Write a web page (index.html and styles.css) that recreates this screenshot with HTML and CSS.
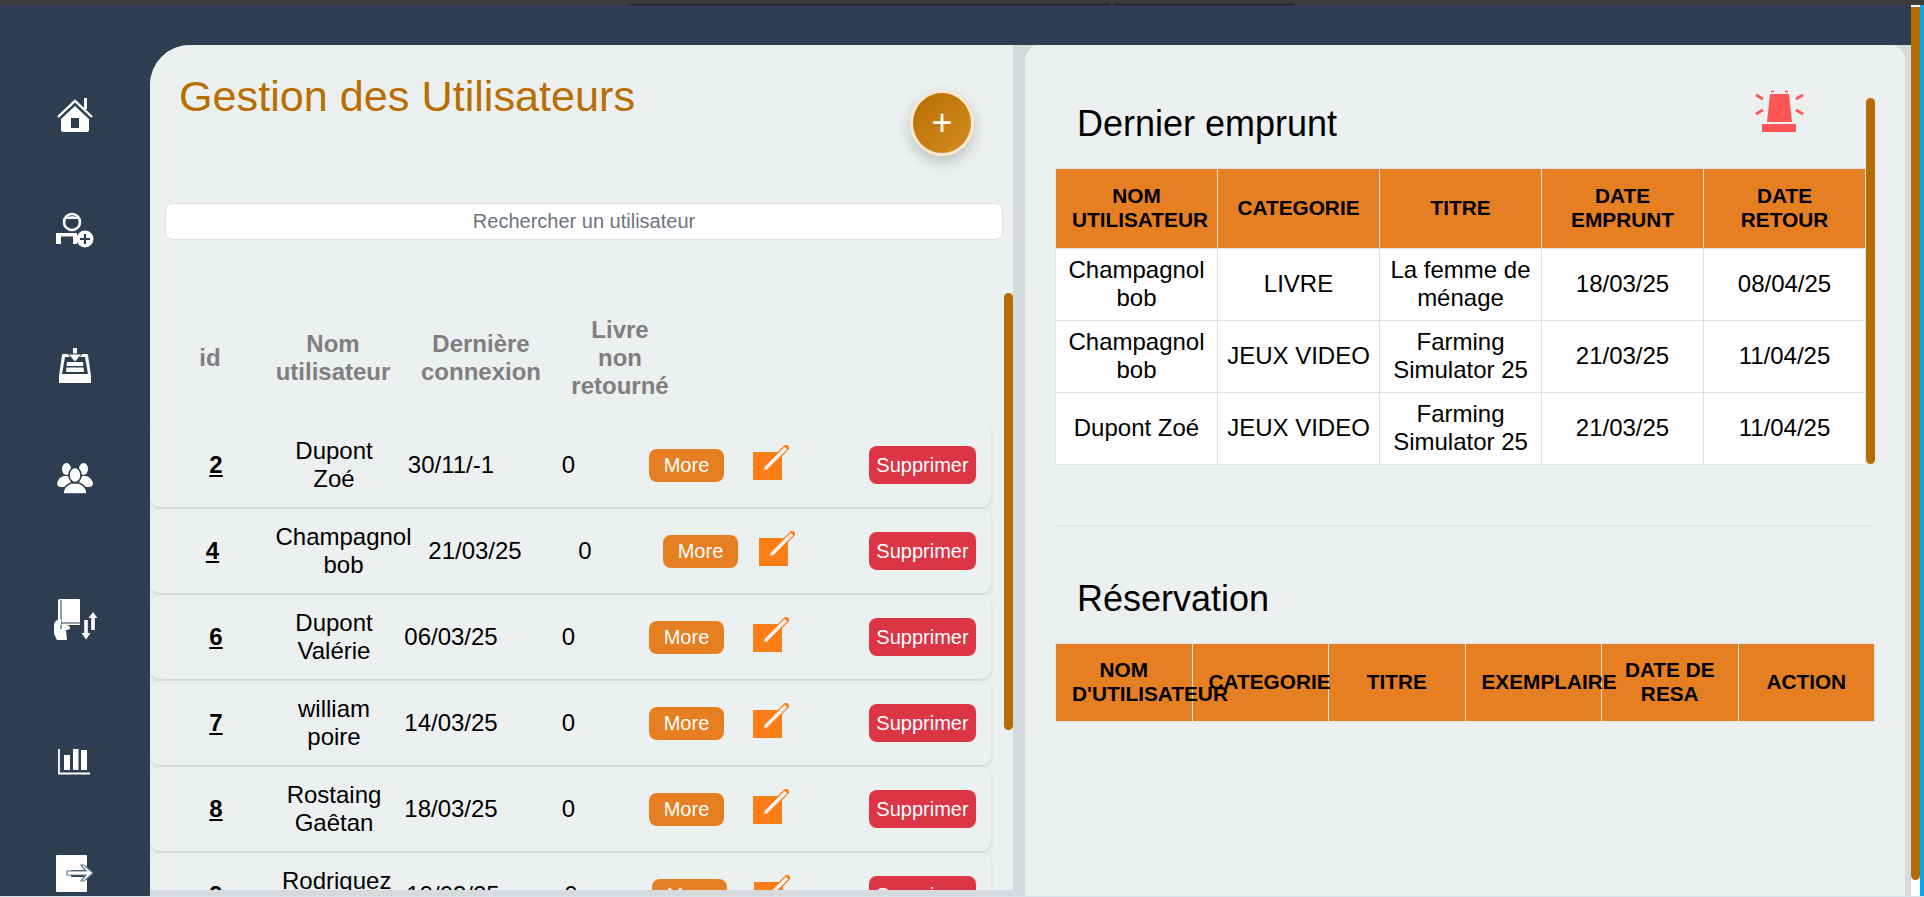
FILE: index.html
```html
<!DOCTYPE html>
<html lang="fr">
<head>
    <meta charset="utf-8">
    <title>Gestion des Utilisateurs</title>
    <link rel="stylesheet" href="styles.css">
</head>
<body>
    <div class="top-strip">
        <span class="tab-line tab-line-a"></span>
        <span class="tab-line tab-line-b"></span>
    </div>

    <div class="page">
        <div class="shell">
            <nav class="sidebar">
                <a href="#" class="nav-item">
                    <svg width="36" height="34" viewBox="0 0 36 34">
                        <path d="M1 19 18 3l17 16" fill="none" stroke="#fff" stroke-width="2.4"/>
                        <rect x="27" y="0" width="3" height="11" fill="#fff"/>
                        <path d="M4 21 18 8l14 13v11q0 2-2 2H6q-2 0-2-2z" fill="#fff"/>
                        <rect x="14" y="20" width="8" height="10" fill="#2c3e50"/>
                    </svg>
                </a>
                <a href="#" class="nav-item">
                    <svg width="38" height="36" viewBox="0 0 38 36">
                        <circle cx="16" cy="10" r="8" fill="none" stroke="#fff" stroke-width="2.6"/>
                        <path d="M9 7q7-6 14 0z" fill="#fff"/>
                        <path d="M0 21h21v11h-4V24.500H5V32H0z" fill="#fff"/>
                        <circle cx="29" cy="27" r="8.5" fill="#fff"/>
                        <path d="M29 22v10M24 27h10" stroke="#2c3e50" stroke-width="2.2"/>
                    </svg>
                </a>
                <a href="#" class="nav-item">
                    <svg width="32" height="35" viewBox="0 0 32 35">
                        <path d="M4 6h24q1 0 1 1l3 21v7H0v-7L3 7q0-1 1-1z" fill="#fff"/>
                        <path d="M6 9h20l3 17H3z" fill="#2c3e50"/>
                        <path d="M8 14h16l1 10H7z" fill="#fff"/>
                        <rect x="6" y="18" width="20" height="1.500" fill="#2c3e50"/>
                        <rect x="14" y="0" width="4" height="8" fill="#fff"/>
                        <path d="M9 6h14l-7 8z" fill="#fff" stroke="#2c3e50" stroke-width="1"/>
                    </svg>
                </a>
                <a href="#" class="nav-item">
                    <svg width="36" height="32" viewBox="0 0 36 32">
                        <ellipse cx="9.500" cy="7" rx="4.500" ry="6" fill="#fff"/>
                        <ellipse cx="26.500" cy="7" rx="4.500" ry="6" fill="#fff"/>
                        <path d="M0 21q2-6 7-7h4l4 8-3 3H3q-3-1-3-4zM36 21q-2-6-7-7h-4l-4 8 3 3h9q3-1 3-4z" fill="#fff"/>
                        <ellipse cx="18" cy="13" rx="6" ry="7.500" fill="#fff" stroke="#2c3e50" stroke-width="1.500"/>
                        <path d="M6 32q0-8 8-11h8q8 3 8 11z" fill="#fff" stroke="#2c3e50" stroke-width="1.500"/>
                    </svg>
                </a>
                <a href="#" class="nav-item">
                    <svg width="45" height="41" viewBox="0 0 45 41">
                        <path d="M5 2q0-2 2-2h19q1 0 1 1v25H5z" fill="#fff"/>
                        <path d="M8 1v25M8 24h19M8 28h19" stroke="#2c3e50" stroke-width="1" fill="none"/>
                        <path d="M1 27q0-4 3-6l4-1v6h5q4 0 4 3v1q-2 1-4 1l1 10H4l-3-6z" fill="#fff"/>
                        <path d="M8 26v4" stroke="#2c3e50" stroke-width="1"/>
                        <path d="M40 18v13M33 21v14" stroke="#fff" stroke-width="3.600"/>
                        <path d="M35.500 19l4.500-6 4.500 6zM28.500 34h9l-4.500 6.500z" fill="#fff"/>
                    </svg>
                </a>
                <a href="#" class="nav-item nav-item-chart">
                    <svg width="32" height="26" viewBox="0 0 32 26">
                        <path d="M1 0v24.500h31" fill="none" stroke="#fff" stroke-width="1.800"/>
                        <rect x="6" y="6" width="6" height="15" fill="#fff"/>
                        <rect x="15" y="0" width="5.500" height="21" fill="#fff"/>
                        <rect x="23" y="1" width="6" height="20" fill="#fff"/>
                    </svg>
                </a>
                <a href="#" class="nav-item">
                    <svg width="38" height="37" viewBox="0 0 38 37">
                        <path d="M1 0h29q1 0 1 1v10l-2 4-14 0v7h14l2 3v11q0 1-1 1H1q-1 0-1-1V1q0-1 1-1z" fill="#fff"/>
                        <path d="M11 16h19l-5-6h3l9 8-9 8h-3l5-6H11z" fill="#fff" stroke="#6d7a88" stroke-width="1.200"/>
                    </svg>
                </a>
            </nav>

            <div class="content">
                <section class="users-panel">
                    <div class="users-head">
                        <h1 class="users-title">Gestion des Utilisateurs</h1>
                        <button class="btn-add">+</button>
                    </div>

                    <input class="search" type="text" placeholder="Rechercher un utilisateur">

                    <div class="users-columns">
                        <div>id</div>
                        <div>Nom<br>utilisateur</div>
                        <div>Dernière<br>connexion</div>
                        <div>Livre<br>non<br>retourné</div>
                    </div>

                    <div class="user-row">
                        <a href="#" class="user-id">2</a>
                        <div>Dupont Zoé</div>
                        <div>30/11/-1</div>
                        <div>0</div>
                        <button class="btn-more">More</button>
                        <a href="#" class="btn-edit">
                            <svg width="36" height="35" viewBox="0 0 36 35">
                                <rect x="0" y="7" width="29" height="28" fill="#fd7e14"/>
                                <path d="M11 25 33 3" stroke="#fd7e14" stroke-width="6" stroke-linecap="round"/>
                                <path d="M13 23 33 3" stroke="#f3f3f3" stroke-width="3.400"/>
                                <path d="M11 25l1-4 3 3z" fill="#f3f3f3"/>
                            </svg>
                        </a>
                        <button class="btn-delete">Supprimer</button>
                    </div>

                    <div class="user-row user-row-wide">
                        <a href="#" class="user-id">4</a>
                        <div>Champagnol bob</div>
                        <div>21/03/25</div>
                        <div>0</div>
                        <button class="btn-more">More</button>
                        <a href="#" class="btn-edit">
                            <svg width="36" height="35" viewBox="0 0 36 35">
                                <rect x="0" y="7" width="29" height="28" fill="#fd7e14"/>
                                <path d="M11 25 33 3" stroke="#fd7e14" stroke-width="6" stroke-linecap="round"/>
                                <path d="M13 23 33 3" stroke="#f3f3f3" stroke-width="3.400"/>
                                <path d="M11 25l1-4 3 3z" fill="#f3f3f3"/>
                            </svg>
                        </a>
                        <button class="btn-delete">Supprimer</button>
                    </div>

                    <div class="user-row">
                        <a href="#" class="user-id">6</a>
                        <div>Dupont Valérie</div>
                        <div>06/03/25</div>
                        <div>0</div>
                        <button class="btn-more">More</button>
                        <a href="#" class="btn-edit">
                            <svg width="36" height="35" viewBox="0 0 36 35">
                                <rect x="0" y="7" width="29" height="28" fill="#fd7e14"/>
                                <path d="M11 25 33 3" stroke="#fd7e14" stroke-width="6" stroke-linecap="round"/>
                                <path d="M13 23 33 3" stroke="#f3f3f3" stroke-width="3.400"/>
                                <path d="M11 25l1-4 3 3z" fill="#f3f3f3"/>
                            </svg>
                        </a>
                        <button class="btn-delete">Supprimer</button>
                    </div>

                    <div class="user-row">
                        <a href="#" class="user-id">7</a>
                        <div>william poire</div>
                        <div>14/03/25</div>
                        <div>0</div>
                        <button class="btn-more">More</button>
                        <a href="#" class="btn-edit">
                            <svg width="36" height="35" viewBox="0 0 36 35">
                                <rect x="0" y="7" width="29" height="28" fill="#fd7e14"/>
                                <path d="M11 25 33 3" stroke="#fd7e14" stroke-width="6" stroke-linecap="round"/>
                                <path d="M13 23 33 3" stroke="#f3f3f3" stroke-width="3.400"/>
                                <path d="M11 25l1-4 3 3z" fill="#f3f3f3"/>
                            </svg>
                        </a>
                        <button class="btn-delete">Supprimer</button>
                    </div>

                    <div class="user-row">
                        <a href="#" class="user-id">8</a>
                        <div>Rostaing Gaêtan</div>
                        <div>18/03/25</div>
                        <div>0</div>
                        <button class="btn-more">More</button>
                        <a href="#" class="btn-edit">
                            <svg width="36" height="35" viewBox="0 0 36 35">
                                <rect x="0" y="7" width="29" height="28" fill="#fd7e14"/>
                                <path d="M11 25 33 3" stroke="#fd7e14" stroke-width="6" stroke-linecap="round"/>
                                <path d="M13 23 33 3" stroke="#f3f3f3" stroke-width="3.400"/>
                                <path d="M11 25l1-4 3 3z" fill="#f3f3f3"/>
                            </svg>
                        </a>
                        <button class="btn-delete">Supprimer</button>
                    </div>

                    <div class="user-row user-row-last">
                        <a href="#" class="user-id">9</a>
                        <div>Rodriguez Marie</div>
                        <div>19/03/25</div>
                        <div>0</div>
                        <button class="btn-more">More</button>
                        <a href="#" class="btn-edit">
                            <svg width="36" height="35" viewBox="0 0 36 35">
                                <rect x="0" y="7" width="29" height="28" fill="#fd7e14"/>
                                <path d="M11 25 33 3" stroke="#fd7e14" stroke-width="6" stroke-linecap="round"/>
                                <path d="M13 23 33 3" stroke="#f3f3f3" stroke-width="3.400"/>
                                <path d="M11 25l1-4 3 3z" fill="#f3f3f3"/>
                            </svg>
                        </a>
                        <button class="btn-delete">Supprimer</button>
                    </div>

                    <div class="panel-thumb"></div>
                </section>

                <section class="side-panel">
                    <div class="side-head">
                        <h2 class="side-title">Dernier emprunt</h2>
                        <svg class="alert-icon" width="50" height="43" viewBox="0 0 50 43">
                            <path d="M16 4h19l3 28H13z" fill="#ff5555"/>
                            <rect x="8" y="34" width="34" height="8" fill="#ff5555"/>
                            <path d="M2 5l7 4M2 24l7-4M49 5l-7 4M49 24l-7-4" stroke="#ff5555" stroke-width="2.600"/>
                            <path d="M17 1.500h3M31 1.500h3" stroke="#ff5555" stroke-width="1.400"/>
                        </svg>
                    </div>

                    <table class="data-table data-table-short">
                        <thead>
                            <tr>
                                <th>NOM UTILISATEUR</th>
                                <th>CATEGORIE</th>
                                <th>TITRE</th>
                                <th>DATE EMPRUNT</th>
                                <th>DATE RETOUR</th>
                            </tr>
                        </thead>
                        <tbody>
                            <tr>
                                <td>Champagnol bob</td>
                                <td>LIVRE</td>
                                <td>La femme de ménage</td>
                                <td>18/03/25</td>
                                <td>08/04/25</td>
                            </tr>
                            <tr>
                                <td>Champagnol bob</td>
                                <td>JEUX VIDEO</td>
                                <td>Farming Simulator 25</td>
                                <td>21/03/25</td>
                                <td>11/04/25</td>
                            </tr>
                            <tr>
                                <td>Dupont Zoé</td>
                                <td>JEUX VIDEO</td>
                                <td>Farming Simulator 25</td>
                                <td>21/03/25</td>
                                <td>11/04/25</td>
                            </tr>
                        </tbody>
                    </table>

                    <hr class="side-sep">

                    <h2 class="side-title side-title-resa">Réservation</h2>

                    <table class="data-table">
                        <thead>
                            <tr>
                                <th>NOM D'UTILISATEUR</th>
                                <th>CATEGORIE</th>
                                <th>TITRE</th>
                                <th>EXEMPLAIRE</th>
                                <th>DATE DE RESA</th>
                                <th>ACTION</th>
                            </tr>
                        </thead>
                    </table>

                    <div class="side-thumb"></div>
                </section>
            </div>
        </div>

        <div class="page-track"><div class="page-thumb"></div></div>
        <div class="page-edge"></div>
    </div>

    <div class="bottom-line"></div>
</body>
</html>
```

FILE: styles.css
```css
* {
    box-sizing: border-box;
}

html, body {
    margin: 0;
    height: 100%;
    overflow: hidden;
}

body {
    font-family: "Liberation Sans", Arial, sans-serif;
    color: #000;
    background-color: #fff;
}

/* Dark line at the very top */
.top-strip {
    display: flex;
    align-items: flex-end;
    height: 5px;
    background-color: #3c3c3c;
}

.tab-line {
    height: 1px;
    background-color: #1d1d1d;
}

.tab-line-a {
    width: 481px;
    margin-left: 629px;
}

.tab-line-b {
    width: 180px;
    margin-left: 4px;
}

.page {
    display: flex;
    height: 891px;
}

.shell {
    display: flex;
    width: 1911px;
    background-color: #2c3e50;
}

/* Sidebar */
.sidebar {
    flex: none;
    display: grid;
    grid-template-rows: 114px 136px 114px 137px 150px 106px auto;
    justify-items: center;
    width: 150px;
    padding-top: 93px;
}

.nav-item {
    display: block;
    line-height: 0;
}

.nav-item-chart {
    margin-right: 3px;
}

.content {
    flex: 1;
    display: flex;
    gap: 12px;
    margin-top: 40px;
    padding-right: 6px;
    background-color: #d5dadc;
    border-top-left-radius: 40px;
}

/* Left panel */
.users-panel {
    position: relative;
    flex: none;
    width: 863px;
    height: 845px;
    overflow: hidden;
    background-color: #ecf0f1;
    border-top-left-radius: 40px;
}

.users-head {
    display: flex;
    justify-content: space-between;
    align-items: flex-start;
    height: 158px;
    padding: 27px 39px 0 29px;
}

.users-title {
    margin: 0;
    font-size: 43.2px;
    font-weight: normal;
    color: #b86e00;
}

.btn-add {
    width: 64px;
    height: 66px;
    margin-top: 18px;
    padding: 0;
    font-size: 36px;
    font-weight: normal;
    line-height: 1;
    color: #fff;
    background: linear-gradient(135deg, #b56c00, #d68f25);
    border: 3px solid #fbe8cf;
    border-radius: 50%;
    box-shadow: 0 6px 14px rgba(0, 0, 0, 0.2);
}

.search {
    display: block;
    width: 838px;
    height: 37px;
    margin-left: 15px;
    font-family: inherit;
    font-size: 20px;
    text-align: center;
    background-color: #fff;
    border: 1px solid #dee2e6;
    border-radius: 8px;
}

.search::placeholder {
    color: #6c757d;
    opacity: 1;
}

.users-columns {
    display: grid;
    grid-template-columns: 120px 126px 170px 108px;
    align-items: center;
    padding: 76px 0 23px;
    font-size: 24px;
    font-weight: bold;
    line-height: 28px;
    text-align: center;
    color: #7f7f7f;
}

/* One row per user */
.user-row {
    display: grid;
    grid-template-columns: 132px 104px 130px 105px 132px 116px 107px;
    align-items: center;
    width: 841px;
    height: 84px;
    margin-bottom: 2px;
    padding-right: 15px;
    font-size: 24px;
    line-height: 28px;
    text-align: center;
    background-color: #ecf0f1;
    border-radius: 10px;
    box-shadow: 0 2px 4px rgba(0, 0, 0, 0.12);
    --more-gap: 28px;
}

.user-row-wide {
    grid-template-columns: 125px 137px 126px 94px 127px 110px 107px;
    --more-gap: 31px;
}

.user-row-last {
    grid-template-columns: 132px 108px 126px 110px 128px 115px 107px;
    --more-gap: 26px;
}

.user-id {
    font-weight: bold;
    color: #000;
}

.btn-more,
.btn-delete {
    padding: 0;
    font-family: inherit;
    font-size: 20px;
    color: #fff;
    border: none;
    border-radius: 8px;
    cursor: pointer;
}

.btn-more {
    justify-self: start;
    width: 75px;
    height: 33px;
    margin-left: var(--more-gap);
    background-color: #e67e22;
}

.btn-delete {
    width: 107px;
    height: 38px;
    background-color: #dc3545;
}

.btn-edit {
    display: block;
    justify-self: start;
    height: 35px;
    margin-top: -6px;
    line-height: 0;
}

.panel-thumb {
    position: absolute;
    top: 248px;
    left: 854px;
    width: 9px;
    height: 437px;
    background-color: #b56c00;
    border-radius: 5px;
}

/* Right panel */
.side-panel {
    position: relative;
    flex: none;
    width: 880px;
    height: 851px;
    padding: 45px 30px 0;
    background-color: #ecf0f1;
    border-radius: 15px 15px 0 0;
}

.side-head {
    display: flex;
    justify-content: space-between;
    align-items: flex-start;
    height: 53px;
    margin-bottom: 25px;
    padding-right: 71px;
}

.side-title {
    margin: 13px 0 0 22px;
    font-size: 36px;
    font-weight: normal;
}

.side-title-resa {
    margin: 52px 0 23px 22px;
}

.data-table {
    width: 820px;
    table-layout: fixed;
    border-collapse: collapse;
    font-size: 24px;
    line-height: 27.500px;
    text-align: center;
}

.data-table-short {
    width: 811px;
}

.data-table th,
.data-table td {
    border: 1px solid #dee2e6;
}

.data-table th {
    padding: 14px 16px 16px;
    font-size: 20.800px;
    line-height: 23.500px;
    background-color: #e67e22;
}

.data-table-short th {
    padding: 15px 16px 17px;
}

.data-table td {
    padding: 7px 8px 9px;
    background-color: #fff;
}

.side-sep {
    margin: 60px 0 0;
    border: 0;
    border-top: 1px solid #dee2e6;
}

.side-thumb {
    position: absolute;
    top: 53px;
    left: 841px;
    width: 9px;
    height: 366px;
    background-color: #b56c00;
    border-radius: 5px;
}

/* Page scrollbar on the far right */
.page-track {
    display: flex;
    width: 9px;
    padding: 2px 0 16px;
    background-color: #fff;
}

.page-thumb {
    flex: 1;
    background-color: #b56c00;
    border-radius: 0 0 5px 5px;
}

.page-edge {
    flex: 1;
    background-color: #00a8f0;
}

.bottom-line {
    height: 1px;
    background-color: #d3e4ea;
}
```
